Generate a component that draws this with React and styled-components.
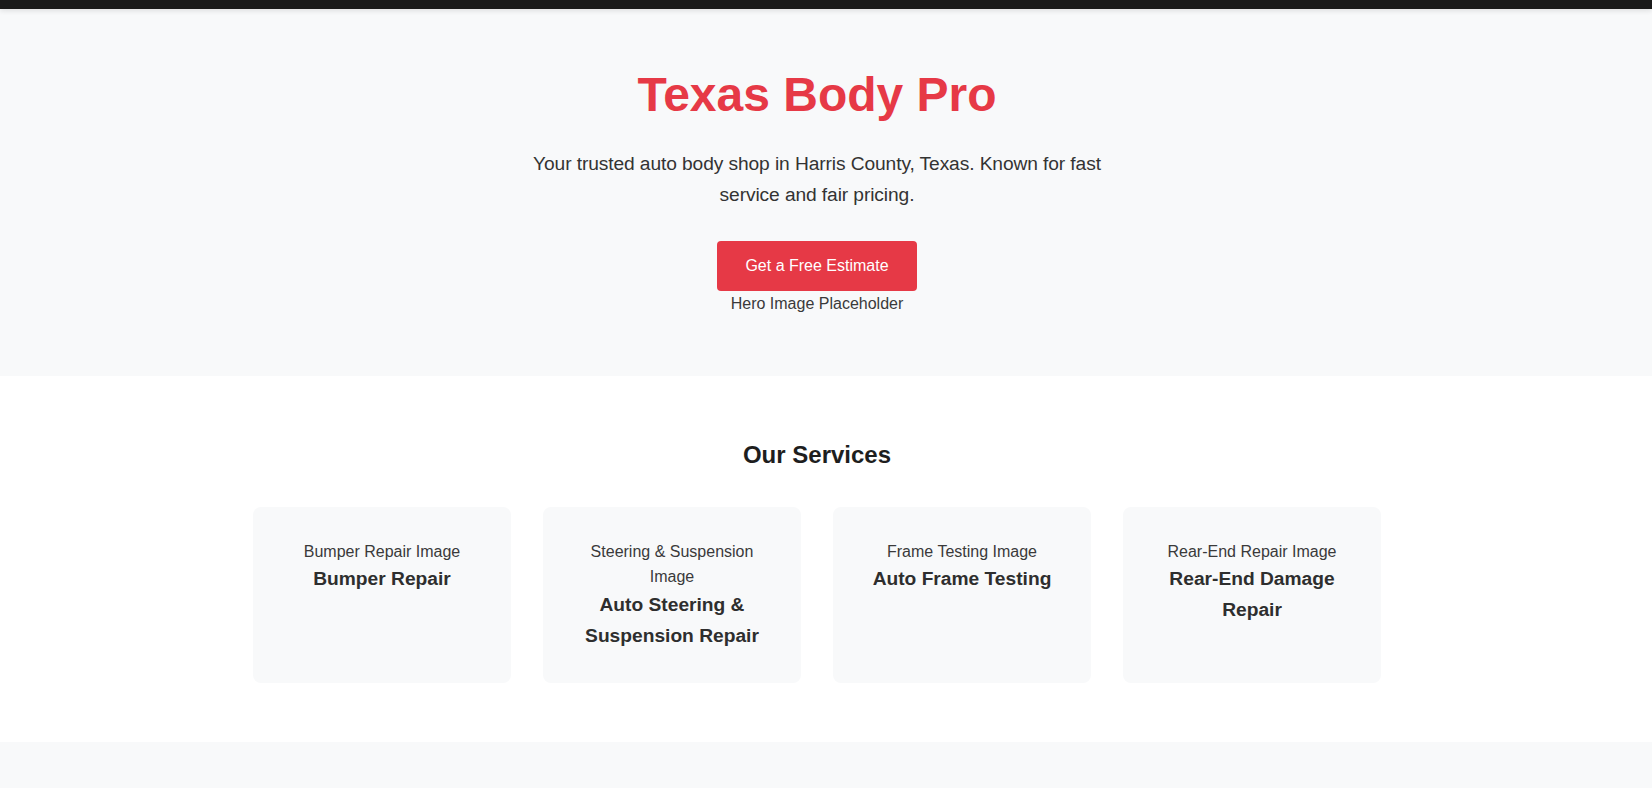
import React from 'react'
import styled, { createGlobalStyle } from 'styled-components'

const GlobalStyle = createGlobalStyle`
  * {
    box-sizing: border-box;
  }
  body {
    margin: 0;
    font-family: "Liberation Sans", Arial, sans-serif;
    line-height: 1.6;
    color: #333;
    background: #fff;
  }
`

const TopBar = styled.header`
  position: relative;
  z-index: 2;
  height: 9px;
  background: #1a1a1a;
  box-shadow: 0 2px 5px rgba(0, 0, 0, 0.1);
`

const Hero = styled.section`
  background: #f8f9fa;
  padding: 48px 50px 60px 32px;
  text-align: center;
`

const Title = styled.h1`
  margin: 0 0 15px;
  font-size: 48px;
  color: #e63946;
`

const Lead = styled.p`
  max-width: 600px;
  margin: 0 auto 31px;
  font-size: 1.2rem;
  letter-spacing: -0.1px;
`

const Button = styled.a`
  display: inline-block;
  padding: 12px 28px;
  background: #e63946;
  color: #fff;
  border-radius: 4px;
  font-size: 16px;
  text-decoration: none;
`

const Placeholder = styled.div`
  font-size: 16px;
  color: #3a3a3a;
`

const Section = styled.section`
  background: ${(p) => (p.$alt ? '#f8f9fa' : '#fff')};
  padding: 60px 50px 59px 32px;
  text-align: center;
  min-height: ${(p) => (p.$alt ? '120px' : '0')};
`

const SectionTitle = styled.h2`
  margin: 0 0 32px;
  font-size: 24px;
  color: #1e1e1e;
`

const Grid = styled.div`
  display: grid;
  grid-template-columns: repeat(4, 1fr);
  gap: 32px;
  max-width: 1128px;
  margin: 0 auto;
`

const Card = styled.div`
  background: #f8f9fa;
  border-radius: 8px;
  padding: 32px;
`

const CardImage = styled.div`
  font-size: 16px;
  color: #3a3a3a;
`

const CardTitle = styled.h3`
  margin: 0;
  font-size: 1.2rem;
  color: #2e2e2e;
`

const services = [
  { image: 'Bumper Repair Image', title: 'Bumper Repair' },
  { image: 'Steering & Suspension Image', title: 'Auto Steering & Suspension Repair' },
  { image: 'Frame Testing Image', title: 'Auto Frame Testing' },
  { image: 'Rear-End Repair Image', title: 'Rear-End Damage Repair' },
]

export default function App() {
  return (
    <>
      <GlobalStyle />
      <TopBar />
      <Hero>
        <Title>Texas Body Pro</Title>
        <Lead>
          Your trusted auto body shop in Harris County, Texas. Known for fast service and fair
          pricing.
        </Lead>
        <Button href="#contact">Get a Free Estimate</Button>
        <Placeholder>Hero Image Placeholder</Placeholder>
      </Hero>
      <Section>
        <SectionTitle>Our Services</SectionTitle>
        <Grid>
          {services.map((s) => (
            <Card key={s.title}>
              <CardImage>{s.image}</CardImage>
              <CardTitle>{s.title}</CardTitle>
            </Card>
          ))}
        </Grid>
      </Section>
      <Section $alt />
    </>
  )
}
